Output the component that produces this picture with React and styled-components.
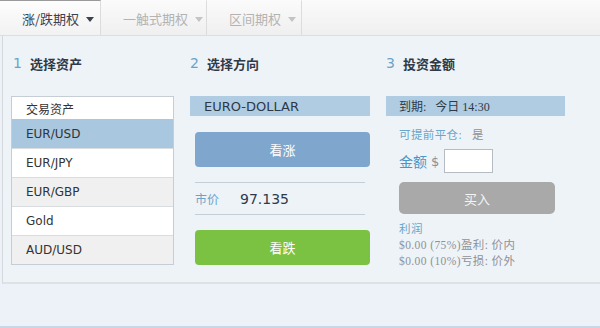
import React from "react";
import styled, { createGlobalStyle } from "styled-components";

const Global = createGlobalStyle`
  html, body { margin: 0; padding: 0; }
  body {
    width: 600px; height: 328px; overflow: hidden;
    background: #eaf0f7;
    font-family: "DejaVu Sans", "Noto Sans CJK SC", sans-serif;
  }
`;

const Page = styled.div`
  width: 600px; height: 328px;
  display: flex; flex-direction: column;
  background: #edf2f8;
  border-bottom: 2px solid #c9d6e6;
  box-sizing: border-box;
`;

const TabBar = styled.div`
  height: 36px; display: flex;
  background: linear-gradient(#fbfbfb, #efefef);
  border-bottom: 1px solid #dedede;
  box-sizing: border-box;
`;

const Tab = styled.div`
  width: ${p => p.$w}px;
  display: flex; align-items: center; gap: 7px;
  padding-left: 22px;
  font-size: 13px;
  font-family: "Noto Sans CJK SC", sans-serif;
  color: ${p => (p.$active ? "#3b4250" : "#b3b3b3")};
  border-right: 1px solid #dcdcdc;
  border-top: 1px solid ${p => (p.$active ? "#9a9a9a" : "transparent")};
  background: ${p => (p.$active ? "linear-gradient(#fdfdfd, #f2f2f2)" : "transparent")};
  box-sizing: border-box;
  padding-top: 1px;
`;

const Caret = styled.span`
  width: 0; height: 0;
  border-left: 4px solid transparent;
  border-right: 4px solid transparent;
  border-top: 5px solid ${p => (p.$active ? "#3b4250" : "#c4c4c4")};
  margin-top: 2px;
`;

const Panel = styled.div`
  height: 248px;
  background: #eef3f8;
  border-left: 1px solid #d4d8dc;
  border-bottom: 2px solid #dfe2e5;
  margin-left: 2px;
  box-sizing: border-box;
  display: grid;
  grid-template-columns: 163px 180px 179px;
  column-gap: 16px;
  padding: 18px 0 0 8px;
`;

const Column = styled.div`
  display: flex; flex-direction: column;
`;

const StepTitle = styled.div`
  display: flex; align-items: center; gap: 8px;
  height: 18px;
  margin-bottom: 24px;
  margin-left: ${p => p.$ml || 0}px;
`;

const StepNum = styled.span`
  font-family: "DejaVu Sans", sans-serif;
  font-size: 14px; color: #6aa3c8;
`;

const StepText = styled.span`
  font-family: "Noto Sans CJK SC", sans-serif;
  font-weight: 700; font-size: 13px; color: #2f3a48;
`;

const AssetList = styled.div`
  border: 1px solid #c6cdd4;
  background: #fff;
  display: flex; flex-direction: column;
`;

const AssetHeader = styled.div`
  height: 22px; padding-left: 14px;
  display: flex; align-items: center;
  font-family: "Noto Sans CJK SC", sans-serif;
  font-size: 12px; color: #333;
`;

const AssetRow = styled.div`
  height: 29px; padding-left: 14px;
  display: flex; align-items: center;
  font-size: 12px; color: #333;
  box-sizing: border-box;
  border-top: 1px solid ${p => (p.$sel ? "#a9c7df" : "#dadde0")};
  background: ${p => (p.$sel ? "#a9c7df" : p.$alt ? "#f0f0f0" : "#fff")};
`;

const InfoBar = styled.div`
  height: 20px; display: flex; align-items: center;
  padding-left: ${p => p.$pl}px;
  background: #b0cce2;
  color: #2d3947;
  font-size: ${p => p.$fs}px;
  font-family: ${p => p.$serif ? `"Liberation Serif", "Noto Sans CJK SC", serif` : `"DejaVu Sans", sans-serif`};
  margin-bottom: ${p => p.$mb}px;
`;

const BigButton = styled.div`
  height: 35px; border-radius: 4px;
  margin-left: 5px;
  display: flex; align-items: center; justify-content: center;
  color: #fff; font-size: 13px;
  font-family: "Noto Sans CJK SC", sans-serif;
  background: ${p => p.$bg};
`;

const PriceRow = styled.div`
  margin: 15px 5px 15px 5px;
  height: 31px;
  border-top: 1px solid #c5ced8;
  border-bottom: 1px solid #c5ced8;
  display: flex; align-items: center;
`;

const PriceLabel = styled.span`
  font-family: "Noto Sans CJK SC", sans-serif;
  font-size: 12px; color: #6aa3c8; width: 45px;
`;

const PriceValue = styled.span`
  font-size: 14px; color: #2f3a48;
`;

const SerifLine = styled.div`
  font-family: "Liberation Serif", "Noto Sans CJK SC", serif;
  font-size: 11.5px;
  letter-spacing: 0.4px;
  color: #8e9297;
  margin-left: 13px;
  line-height: ${p => p.$lh || 16}px;
`;

const Blue = styled.span`
  color: #6aa6c8;
`;

const AmountRow = styled.div`
  display: flex; align-items: center; gap: 4px;
  margin: 6px 0 0 13px;
  height: 24px;
`;

const AmountLabel = styled.span`
  font-family: "Noto Sans CJK SC", sans-serif;
  font-size: 14px; color: #4d95c4;
`;

const Dollar = styled.span`
  font-size: 13px; color: #8a8f95;
`;

const AmountInput = styled.input`
  width: 49px; height: 24px;
  box-sizing: border-box;
  border: 1px solid #b7bcc2;
  background: #fff;
  margin-left: 1px;
  padding: 0;
`;

const BuyButton = styled.div`
  margin: 9px 10px 7px 13px;
  height: 32px; border-radius: 5px;
  background: #a9a9a9;
  display: flex; align-items: center; justify-content: center;
  color: #f4f4f4; font-size: 13px;
  font-family: "Noto Sans CJK SC", sans-serif;
`;

const assets = [
  { n: "EUR/USD", sel: true },
  { n: "EUR/JPY" },
  { n: "EUR/GBP", alt: true },
  { n: "Gold" },
  { n: "AUD/USD", alt: true },
];

export default function App() {
  return (
    <>
      <Global />
      <Page>
        <TabBar>
          <Tab $w={101} $active>涨/跌期权 <Caret $active /></Tab>
          <Tab $w={106}>一触式期权 <Caret /></Tab>
          <Tab $w={95}>区间期权 <Caret /></Tab>
        </TabBar>
        <Panel>
          <Column>
            <StepTitle $ml={2}><StepNum>1</StepNum><StepText>选择资产</StepText></StepTitle>
            <AssetList>
              <AssetHeader>交易资产</AssetHeader>
              {assets.map(a => (
                <AssetRow key={a.n} $sel={a.sel} $alt={a.alt}>{a.n}</AssetRow>
              ))}
            </AssetList>
          </Column>
          <Column>
            <StepTitle><StepNum>2</StepNum><StepText>选择方向</StepText></StepTitle>
            <InfoBar $pl={14} $fs={13} $mb={16}>EURO-DOLLAR</InfoBar>
            <BigButton $bg="#7fa6cd">看涨</BigButton>
            <PriceRow>
              <PriceLabel>市价</PriceLabel>
              <PriceValue>97.135</PriceValue>
            </PriceRow>
            <BigButton $bg="#7cc242">看跌</BigButton>
          </Column>
          <Column>
            <StepTitle><StepNum>3</StepNum><StepText>投资金额</StepText></StepTitle>
            <InfoBar $pl={13} $fs={12} $mb={11} $serif>到期:&nbsp;&nbsp;&nbsp;今日 14:30</InfoBar>
            <SerifLine><Blue>可提前平仓:</Blue>&nbsp;&nbsp;&nbsp;是</SerifLine>
            <AmountRow>
              <AmountLabel>金额</AmountLabel>
              <Dollar>$</Dollar>
              <AmountInput />
            </AmountRow>
            <BuyButton>买入</BuyButton>
            <SerifLine><Blue>利润</Blue></SerifLine>
            <SerifLine>$0.00 (75%)盈利: 价内</SerifLine>
            <SerifLine>$0.00 (10%)亏损: 价外</SerifLine>
          </Column>
        </Panel>
      </Page>
    </>
  );
}
